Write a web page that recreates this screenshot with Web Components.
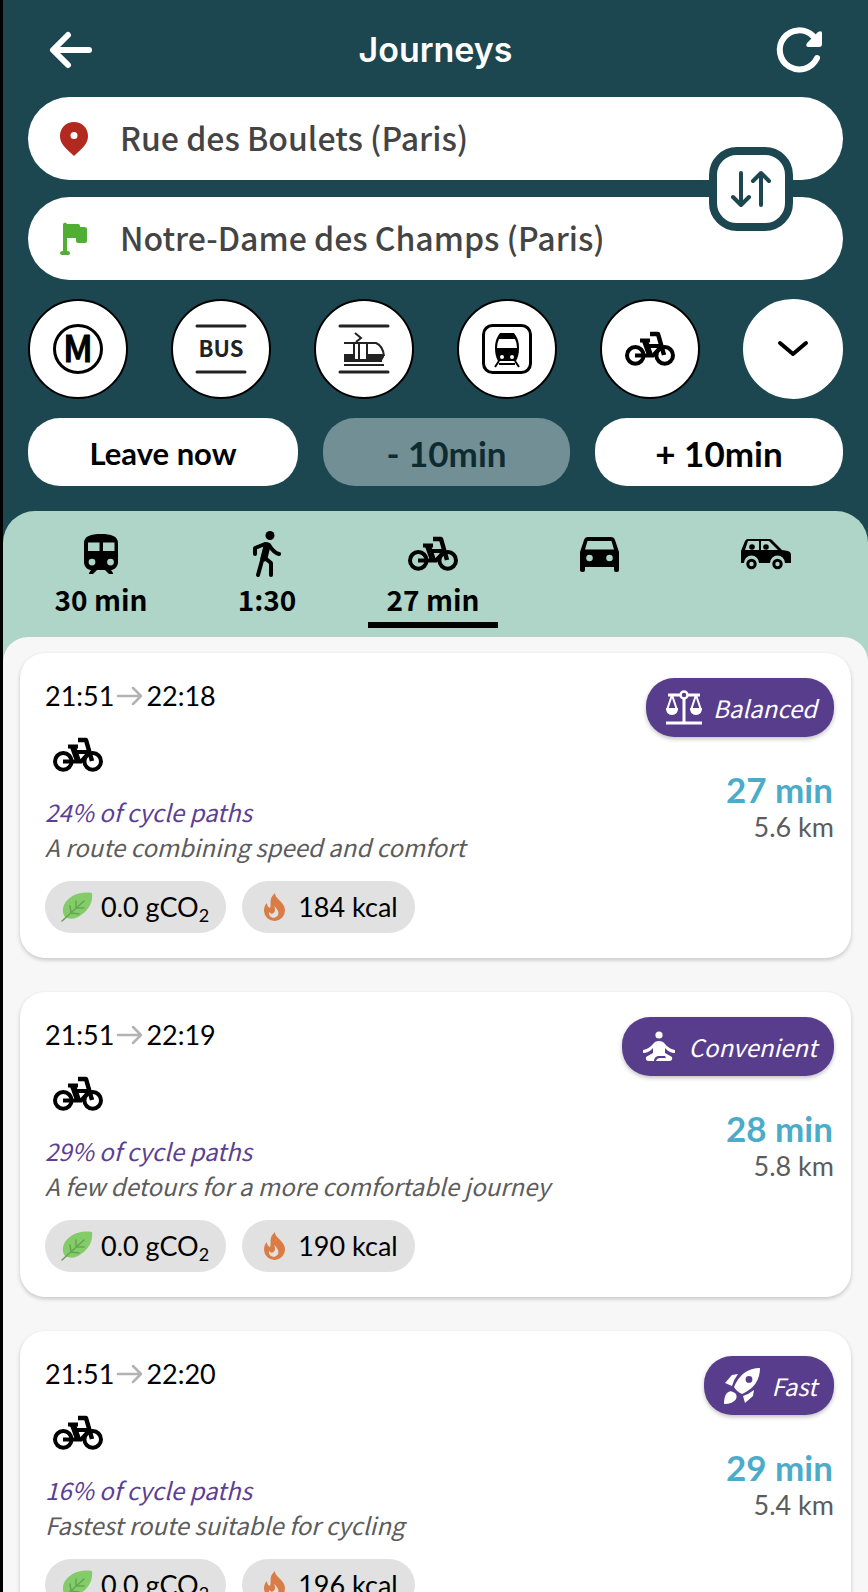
<!DOCTYPE html>
<html lang="en">
<head>
<meta charset="utf-8">
<meta name="viewport" content="width=device-width, initial-scale=1">
<title>Journeys</title>
<style>
  html, body { height: 100%; margin: 0; }
  body { background: #000; }
</style>
</head>
<body>
<journey-app></journey-app>

<script>
const SOURCE = '"Noto Sans CJK SC", "Noto Sans", sans-serif';
const LATO = 'Lato, "Noto Sans", sans-serif';

const ICONS = {
  back: [42, 36, `<path d="M39 18H4M18 3 3 18l15 15" fill="none" stroke="currentColor" stroke-width="6" stroke-linecap="round" stroke-linejoin="round"/>`],
  refresh: [46, 46, `<path d="M40 31A19.500 19.500 0 1 1 36 9" fill="none" stroke="currentColor" stroke-width="6" stroke-linecap="round"/><path d="M41 5q4-2 4 1v11q0 3-3 3H31q-3-1-1-4z" fill="currentColor"/>`],
  pin: [28, 34, `<path fill-rule="evenodd" d="M14 0C6 0 0 6 0 14c0 7 4 11 14 20 10-9 14-13 14-20C28 6 22 0 14 0zm0 10a3.500 3.500 0 1 1 0 7 3.500 3.500 0 0 1 0-7z" fill="#b1291f"/>`],
  flag: [28, 34, `<path d="M3 2q2-3 4 0h11q2 0 2 2v1h4q3 0 3 2v12q0 2-2 2h-7q-2 0-2-2v-3H7v13q3 0 3 2t-2 2H2q-2 0-2-2t3-2z" fill="#51ae34"/>`],
  swap: [40, 36, `<path d="M10 2v32M2 26l8 8 8-8M30 34V2M22 10l8-8 8 8" fill="none" stroke="currentColor" stroke-width="4" stroke-linecap="round" stroke-linejoin="round"/>`],
  chevron: [30, 16, `<path d="m2 2 13 11L28 2" fill="none" stroke="currentColor" stroke-width="4" stroke-linecap="round" stroke-linejoin="round"/>`],
  metro: [50, 50, `<circle cx="25" cy="25" r="23.500" fill="none" stroke="currentColor" stroke-width="3"/><text x="25" y="38" text-anchor="middle" font-family="Noto Sans CJK SC" font-weight="500" font-size="36" stroke="currentColor" stroke-width="1">M</text>`],
  bus: [50, 50, `<path d="M1 2h48M1 48h48" stroke="#222" stroke-width="3" stroke-linecap="round"/><text x="25" y="33" text-anchor="middle" font-family="Noto Sans CJK SC" font-weight="700" font-size="22" fill="#222">BUS</text>`],
  tram: [50, 50, `<g fill="none" stroke="#222"><path d="M1 2h48M1 48h48" stroke-width="3" stroke-linecap="round"/><path d="m16 9 6 5-5 4M5 19h32q7 3 8 13M15 19v18M20 19v18M28 19v18" stroke-width="2"/><path d="M5 41h40" stroke-width="2"/></g><path d="M5 30h10v7H5zM29 30h16v3l-3 5H29zM5 35h38v3H5z" fill="#222"/>`],
  rail: [50, 50, `<rect x="1.500" y="1.500" width="47" height="47" rx="9" fill="none" stroke="currentColor" stroke-width="3"/><path fill-rule="evenodd" d="M18 9h14l2 3q3 5 3 12 0 8-3 13H16q-3-5-3-13 0-7 3-12zM17 15q-2 4-2 9h20q0-5-2-9zM20 31a2 2 0 1 0 0 4 2 2 0 0 0 0-4zm10 0a2 2 0 1 0 0 4 2 2 0 0 0 0-4z"/><path d="m17 37-4 6m20-6 4 6M17 40h16" stroke="currentColor" stroke-width="2"/>`],
  bike: [50, 34, `<g fill="none" stroke="currentColor"><g stroke-width="4"><circle cx="10.300" cy="23.400" r="8.300"/><circle cx="39.700" cy="23.400" r="8.300"/></g><path d="M25 2h8l6 21" stroke-width="4.500" stroke-linejoin="round"/><path d="M20 14h16M10 23.500h18l8-9" stroke-width="4"/><path d="M20 9l5 14" stroke-width="6"/><path d="M15 8.500h10" stroke-width="4"/></g>`],
  train: [34, 40, `<path fill-rule="evenodd" d="M17 0C7 0 0 2 0 9v19c0 4 3 8 7 8l-2 3v1h4l4-4h8l4 4h4v-1l-2-3c4 0 7-4 7-8V9C34 2 27 0 17 0zM4 8.500h11.500V17H4zm15 0h11.500V17H19zM8 24.700a3.400 3.400 0 1 1 0 6.800 3.400 3.400 0 0 1 0-6.800zm18.500 0a3.400 3.400 0 1 1 0 6.800 3.400 3.400 0 0 1 0-6.800z"/>`],
  walk: [28, 46, `<g fill="none" stroke="currentColor" stroke-linecap="round" stroke-linejoin="round"><path d="M2 23v-6l10-4 4 1c3 5 6 8 10 9" stroke-width="4"/><path d="M13 15 5 44M12 27l6 5v12" stroke-width="4"/><path d="m14 15-3 12" stroke-width="7"/></g><circle cx="17" cy="4.500" r="4.500"/>`],
  car: [39, 35, `<path fill-rule="evenodd" d="M8 0h23q3 0 4 3l4 12v18q0 2-2 2h-1q-2 0-2-2v-3H5v3q0 2-2 2H2q-2 0-2-2V15L4 3q1-3 4-3zM7.500 4 5 12.500h29L31.500 4zM9.500 17.700a3.300 3.300 0 1 0 0 6.600 3.300 3.300 0 0 0 0-6.600zm20 0a3.300 3.300 0 1 0 0 6.600 3.300 3.300 0 0 0 0-6.600z"/>`],
  suv: [48, 30, `<path fill-rule="evenodd" d="M7 0h21q2 0 3 1l10 10 6 1q3 1 3 4v8h-6a7.500 7.500 0 0 0-15 0H18a7.500 7.500 0 0 0-15 0H0V12L4 2q1-2 3-2zM7 2 4 11h14V2zM20 2v9h17l-9-9z"/><circle cx="11" cy="8" r="2.800"/><circle cx="25" cy="8" r="2.800"/><g fill="none" stroke="currentColor" stroke-width="3"><circle cx="10.500" cy="25" r="3.700"/><circle cx="36.500" cy="25" r="3.700"/></g>`],
  arrow: [26, 18, `<path d="M1 9h23M16 1l8 8-8 8" fill="none" stroke="#b3b3b3" stroke-width="2.500" stroke-linecap="round" stroke-linejoin="round"/>`],
  leaf: [32, 30, `<path d="M31 1C17-1 7 5 3 13c-2 5-1 9 1 12 4 2 10 3 16-2C29 17 32 9 31 1z" fill="#84cc69"/><path d="m1 29 22-20M10 21l-1-7m1 7 8 1m-3-6v-7m0 7h8" fill="none" stroke="#64a552" stroke-width="1.500" stroke-linecap="round"/>`],
  flame: [32, 28, `<path fill-rule="evenodd" d="M17 0c-1 5 10 9 10 17A10.500 10.500 0 0 1 6 18c0-4 1-6 3-8 0 3 1 4 3 5 2-4-2-9 5-15zM16 13q3 5-2 8-2-1-3-2-1 5 5 6 6-2 4-7-2-4-4-5z" fill="#da7c46"/>`],
  Balanced: [36, 36, `<g fill="none" stroke="currentColor"><circle cx="18" cy="5" r="3.500" stroke-width="2.500"/><path d="M2 5h12m8 0h12" stroke-width="3"/><path d="M18 8v25M0 33h36" stroke-width="3"/><path d="m6 5-5 15M6 5l5 15M30 5l-5 15m5-15 5 15" stroke-width="2"/></g><path d="M0 18h12q0 7-6 7t-6-7zm24 0h12q0 7-6 7t-6-7z"/>`],
  Convenient: [36, 36, `<circle cx="17" cy="6" r="3.600"/><path d="M17 12q4 0 6 3 4 5 10 6v3q-6 0-10-5v5l7 4q1 4-3 4H14q1-3 4-3h6l-1-2h-7q-4 1-4 5H7q-4 0-3-4l7-4v-5q-4 5-10 5v-3q6-1 10-6 2-3 6-3z"/>`],
  Fast: [36, 36, `<path fill-rule="evenodd" d="M36 0Q18 0 10 19q3 5 8 7Q36 18 36 0zM25 8a3.400 3.400 0 1 1 0 6.800 3.400 3.400 0 0 1 0-6.800zM14 6 8 7 1 15l7 3q2-7 6-12zM30 22q-5 4-11 6l2 7 8-7zM0 36q0-8 3-11 3-3 6-1 5 2 3 7-3 5-12 5z"/>`]
};

class TransitIcon extends HTMLElement {
  connectedCallback() {
    const [w, h, body] = ICONS[this.getAttribute('name')];
    this.attachShadow({ mode: 'open' }).innerHTML = `
      <style>
        :host { display: block; flex: none; }
        svg { display: block; overflow: visible; }
      </style>
      <svg width="${w}" height="${h}" viewBox="0 0 ${w} ${h}" fill="currentColor" aria-hidden="true">${body}</svg>`;
  }
}
customElements.define('transit-icon', TransitIcon);

class AppHeader extends HTMLElement {
  connectedCallback() {
    this.attachShadow({ mode: 'open' }).innerHTML = `
      <style>
        :host { display: block; color: #fff; }
        header { display: grid; grid-template-columns: 88px 1fr 88px; align-items: center; height: 97px; padding: 3px 24px 0; box-sizing: border-box; }
        h1 { margin: 0; text-align: center; font: 600 34px/44px Inter, sans-serif; }
        button { border: 0; background: none; color: inherit; padding: 0; height: 60px; display: flex; align-items: center; justify-content: center; }
      </style>
      <header>
        <button aria-label="Back"><transit-icon name="back"></transit-icon></button>
        <h1><slot></slot></h1>
        <button aria-label="Refresh"><transit-icon name="refresh"></transit-icon></button>
      </header>`;
  }
}
customElements.define('app-header', AppHeader);

class PlaceField extends HTMLElement {
  connectedCallback() {
    this.attachShadow({ mode: 'open' }).innerHTML = `
      <style>
        :host { display: block; }
        label { display: flex; align-items: center; gap: 32px; height: 83px; padding: 0 32px; box-sizing: border-box; background: #fff; border-radius: 42px; }
        input { flex: 1; min-width: 0; border: 0; padding: 0 0 4px; outline: 0; background: none; color: #444; font: 500 32px/46px ${SOURCE}; }
      </style>
      <label><transit-icon name="${this.getAttribute('icon')}"></transit-icon>
        <input type="text" aria-label="${this.getAttribute('label')}" value="${this.getAttribute('value')}"></label>`;
  }
}
customElements.define('place-field', PlaceField);

class JourneySearch extends HTMLElement {
  connectedCallback() {
    this.attachShadow({ mode: 'open' }).innerHTML = `
      <style>
        :host { display: block; padding: 0 25px 25px; }
        .places { position: relative; display: grid; gap: 17px; }
        .swap { position: absolute; right: 50px; top: 50%; margin-top: -42px; width: 84px; height: 84px; padding: 0; border: 8px solid #1c4750; border-radius: 28px; background: #fff; color: #1c4750; display: flex; align-items: center; justify-content: center; }
        .modes { display: flex; justify-content: space-between; margin: 19px 0; }
        .modes button { width: 100px; height: 100px; padding: 0; border: 2px solid #000; border-radius: 50%; background: #fff; color: #000; display: flex; align-items: center; justify-content: center; }
        .modes .more { border-color: #fff; }
        .times { display: grid; grid-template-columns: 270fr 247fr 248fr; gap: 25px; }
        .times button { height: 68px; border: 0; border-radius: 32px; padding: 1px 0 0; background: #fff; color: #000; font: 700 35px/42px ${LATO}; }
        .times .now { font-size: 31px; }
        .times :disabled { background: #718f94; color: #0f2b32; }
      </style>
      <div class="places">
        <place-field icon="pin" label="From" value="Rue des Boulets (Paris)"></place-field>
        <place-field icon="flag" label="To" value="Notre-Dame des Champs (Paris)"></place-field>
        <button class="swap" aria-label="Swap places"><transit-icon name="swap"></transit-icon></button>
      </div>
      <div class="modes">
        <button aria-label="Metro" aria-pressed="true"><transit-icon name="metro"></transit-icon></button>
        <button aria-label="Bus" aria-pressed="true"><transit-icon name="bus"></transit-icon></button>
        <button aria-label="Tram" aria-pressed="true"><transit-icon name="tram"></transit-icon></button>
        <button aria-label="Train" aria-pressed="true"><transit-icon name="rail"></transit-icon></button>
        <button aria-label="Bike" aria-pressed="true"><transit-icon name="bike"></transit-icon></button>
        <button class="more" aria-label="More options"><transit-icon name="chevron"></transit-icon></button>
      </div>
      <div class="times">
        <button class="now">Leave now</button>
        <button disabled>- 10min</button>
        <button>+ 10min</button>
      </div>`;
  }
}
customElements.define('journey-search', JourneySearch);

class ModeTab extends HTMLElement {
  connectedCallback() {
    const on = this.hasAttribute('selected');
    this.attachShadow({ mode: 'open' }).innerHTML = `
      <style>
        :host { display: flex; justify-content: center; }
        button { width: 130px; height: 117px; padding: 17px 0 0; border: 0; border-bottom: 6px solid transparent; background: none; color: #000; display: flex; flex-direction: column; align-items: center; font: 700 28px/38px ${SOURCE}; }
        button[aria-selected="true"] { border-color: #000; }
        .icon { height: 52px; display: flex; align-items: center; }
      </style>
      <button role="tab" aria-selected="${on}" aria-label="${this.getAttribute('label')}">
        <span class="icon"><transit-icon name="${this.getAttribute('icon')}"></transit-icon></span>
        <slot></slot>
      </button>`;
  }
}
customElements.define('mode-tab', ModeTab);

class InfoChip extends HTMLElement {
  connectedCallback() {
    this.attachShadow({ mode: 'open' }).innerHTML = `
      <style>
        :host { display: flex; align-items: center; gap: 8px; height: 52px; padding: 0 17px 0 16px; border-radius: 26px; background: #e1e1e1; color: #000; font: 400 27px/36px ${LATO}; white-space: nowrap; }
      </style>
      <transit-icon name="${this.getAttribute('icon')}"></transit-icon><span><slot></slot></span>`;
  }
}
customElements.define('info-chip', InfoChip);

class RouteBadge extends HTMLElement {
  connectedCallback() {
    const kind = this.getAttribute('kind');
    this.attachShadow({ mode: 'open' }).innerHTML = `
      <style>
        :host { display: flex; align-items: center; gap: 11px; height: 59px; padding: 0 17px 0 20px; border-radius: 28px; background: #583d8c; color: #fff; box-shadow: 0 2px 4px rgba(0,0,0,.25); font: italic 400 24px/36px ${SOURCE}; }
      </style>
      <transit-icon name="${kind}"></transit-icon><span>${kind}</span>`;
  }
}
customElements.define('route-badge', RouteBadge);

class JourneyCard extends HTMLElement {
  connectedCallback() {
    const a = n => this.getAttribute(n);
    this.attachShadow({ mode: 'open' }).innerHTML = `
      <style>
        :host { display: block; }
        article { display: flex; justify-content: space-between; padding: 25px 17px 25px 25px; background: #fff; border-radius: 25px; box-shadow: 0 2px 4px rgba(0,0,0,.2); }
        p { margin: 0; }
        .times { display: flex; align-items: center; gap: 3px; font: 400 27px/36px ${LATO}; color: #000; }
        .leg { display: block; margin: 24px 0 22px 8px; }
        .note { font: italic 400 24px/35px ${SOURCE}; color: #5c5c5c; white-space: nowrap; }
        .share { color: #5b3f94; }
        .chips { display: flex; gap: 16px; margin-top: 17px; }
        sub { font-size: 18px; line-height: 0; vertical-align: -5px; }
        .side { display: flex; flex-direction: column; align-items: flex-end; }
        .duration { margin: 30px 1px 0 0; font: 700 35px/44px ${LATO}; color: #4bacca; }
        .distance { font: 400 27px/32px ${LATO}; color: #5c5c5c; }
      </style>
      <article>
        <div>
          <p class="times"><time>${a('from')}</time><transit-icon name="arrow"></transit-icon><time>${a('to')}</time></p>
          <transit-icon class="leg" name="bike"></transit-icon>
          <p class="note share">${a('share')} of cycle paths</p>
          <p class="note"><slot></slot></p>
          <div class="chips">
            <info-chip icon="leaf">0.0 gCO<sub>2</sub></info-chip>
            <info-chip icon="flame">${a('energy')} kcal</info-chip>
          </div>
        </div>
        <div class="side">
          <route-badge kind="${a('kind')}"></route-badge>
          <p class="duration">${a('duration')}</p>
          <p class="distance">${a('distance')}</p>
        </div>
      </article>`;
  }
}
customElements.define('journey-card', JourneyCard);

class JourneyApp extends HTMLElement {
  connectedCallback() {
    this.attachShadow({ mode: 'open' }).innerHTML = `
      <style>
        :host { display: flex; flex-direction: column; height: 100vh; overflow: hidden; box-sizing: border-box; border-left: 3px solid #000; background: #1c4750; }
        .sheet { flex: 1; min-height: 0; display: flex; flex-direction: column; background: #aed5c7; border-radius: 32px 32px 0 0; }
        .tabs { display: grid; grid-template-columns: repeat(5, 1fr); padding: 0 20px 9px 15px; }
        main { flex: 1; min-height: 0; overflow-y: auto; scrollbar-width: none; display: flex; flex-direction: column; gap: 34px; padding: 16px 17px; background: #f7f7f7; border-radius: 25px 25px 0 0; }
        journey-card { flex: none; }
      </style>
      <app-header>Journeys</app-header>
      <journey-search></journey-search>
      <div class="sheet">
        <div class="tabs" role="tablist">
          <mode-tab icon="train" label="Transit">30 min</mode-tab>
          <mode-tab icon="walk" label="Walk">1:30</mode-tab>
          <mode-tab icon="bike" label="Bike" selected>27 min</mode-tab>
          <mode-tab icon="car" label="Car"></mode-tab>
          <mode-tab icon="suv" label="Carpool"></mode-tab>
        </div>
        <main>
          <journey-card from="21:51" to="22:18" share="24%" energy="184" kind="Balanced" duration="27 min" distance="5.6 km">A route combining speed and comfort</journey-card>
          <journey-card from="21:51" to="22:19" share="29%" energy="190" kind="Convenient" duration="28 min" distance="5.8 km">A few detours for a more comfortable journey</journey-card>
          <journey-card from="21:51" to="22:20" share="16%" energy="196" kind="Fast" duration="29 min" distance="5.4 km">Fastest route suitable for cycling</journey-card>
        </main>
      </div>`;
  }
}
customElements.define('journey-app', JourneyApp);
</script>
</body>
</html>
